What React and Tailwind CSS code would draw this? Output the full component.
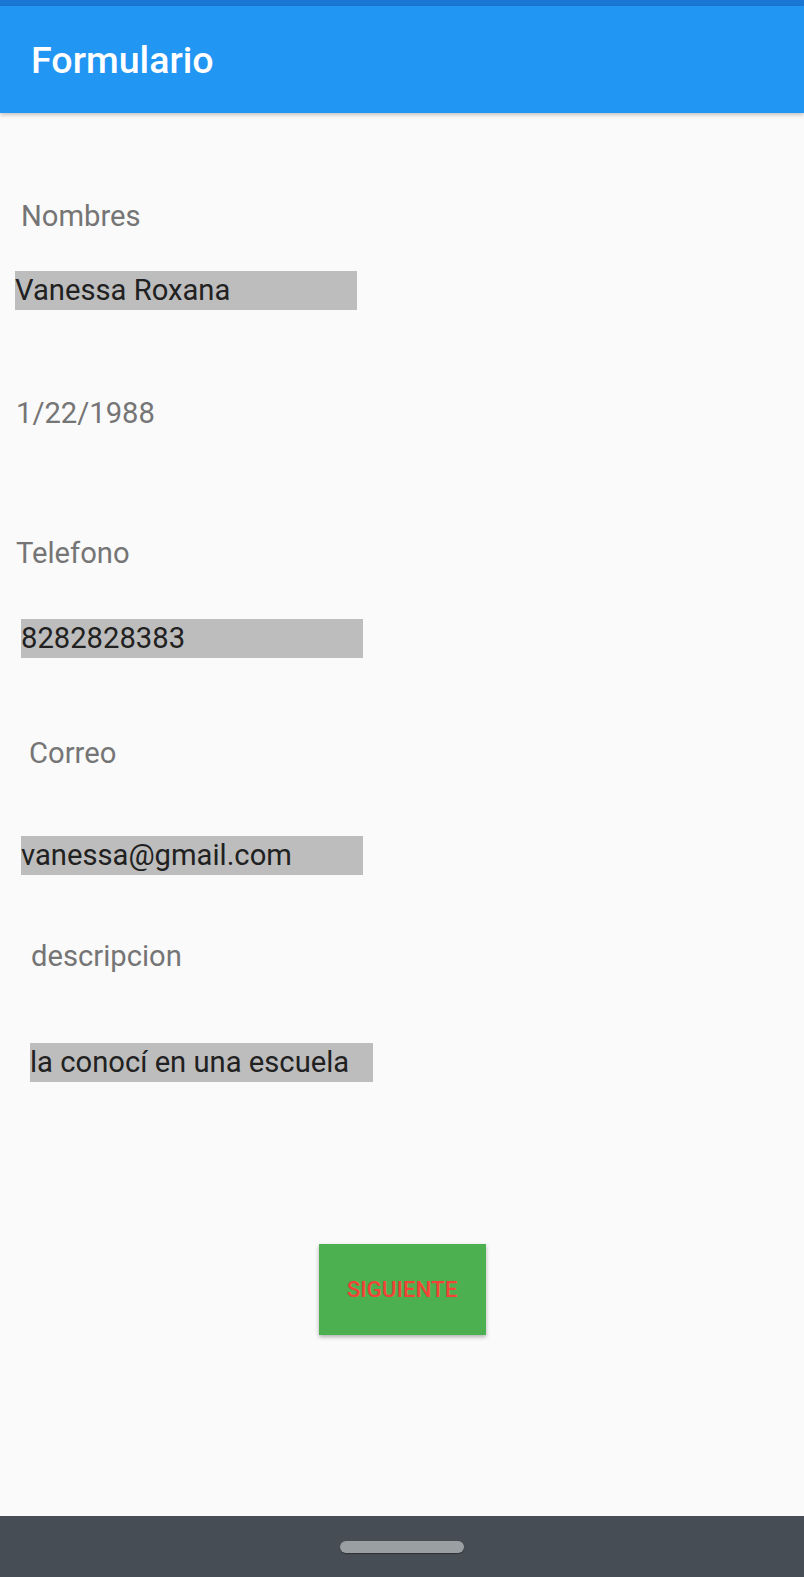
export default function App() {
  const label = "block leading-[39px] text-[29.2px] text-[#757575] whitespace-nowrap";
  const box = "block h-[39px] leading-[39px] bg-[#bdbdbd] text-[29.2px] text-[#212121] whitespace-nowrap overflow-hidden";
  return (
    <div className="h-[1577px] flex flex-col bg-[#fafafa] font-['Roboto',sans-serif] overflow-hidden">
      <div className="h-[6px] bg-[#1976d2]" />
      <header className="relative z-10 h-[107px] bg-[#2196f3] pl-[31px] pt-[2px] shadow-[0_2px_4px_rgba(0,0,0,0.22)]">
        <h1 className="leading-[105px] text-[37.6px] font-medium text-white">Formulario</h1>
      </header>
      <main className="flex-1 flex flex-col">
        <span className={`${label} mt-[84px] ml-[21px]`}>Nombres</span>
        <span className={`${box} mt-[35px] ml-[15px] w-[342px]`}>Vanessa Roxana</span>
        <span className={`${label} mt-[84px] ml-[16px]`}>1/22/1988</span>
        <span className={`${label} mt-[101px] ml-[16px]`}>Telefono</span>
        <span className={`${box} mt-[46px] ml-[21px] w-[342px]`}>8282828383</span>
        <span className={`${label} mt-[76px] ml-[29px]`}>Correo</span>
        <span className={`${box} mt-[63px] ml-[21px] w-[342px]`}>vanessa@gmail.com</span>
        <span className={`${label} mt-[62px] ml-[31px]`}>descripcion</span>
        <span className={`${box} mt-[67px] ml-[30px] w-[343px]`}>la conocí en una escuela</span>
        <button className="mt-[162px] mx-auto w-[167px] h-[91px] bg-[#4caf50] text-[#f44336] text-[22.4px] font-medium shadow-[0_2px_4px_rgba(0,0,0,0.3)]">
          SIGUIENTE
        </button>
      </main>
      <nav className="h-[61px] bg-[#464d55] flex justify-center pt-[25px]">
        <div className="w-[124px] h-[12px] rounded-full bg-[#9aa0a2] shadow-[0_1px_1px_rgba(0,0,0,0.35)]" />
      </nav>
    </div>
  );
}
